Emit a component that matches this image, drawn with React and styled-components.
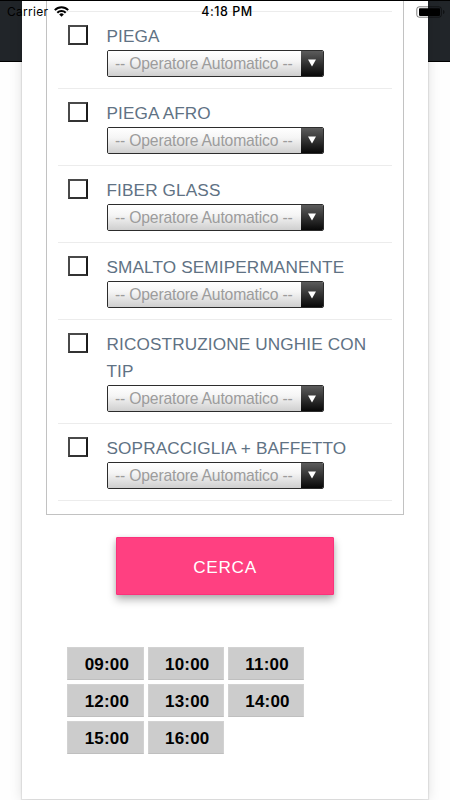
import React, { useState } from 'react';
import styled, { createGlobalStyle } from 'styled-components';

const GlobalStyle = createGlobalStyle`
  * {
    box-sizing: border-box;
  }

  body {
    margin: 0;
    background: #fff;
    font-family: 'Liberation Sans', Arial, sans-serif;
  }
`;

const Page = styled.div`
  position: relative;
  width: 450px;
  height: 800px;
  overflow: hidden;
  padding: 0 22px 1px;
  background: linear-gradient(#212529 61px, #000 61px, #000 62px, #fefefe 62px);
`;

const StatusBar = styled.div`
  position: absolute;
  top: 0;
  left: 0;
  width: 450px;
  height: 22px;
  padding: 0 5px 0 7px;
  display: grid;
  grid-template-columns: 1fr auto 1fr;
  align-items: center;
  border-top: 1px solid #000;
  color: #000;
  z-index: 1;
`;

const Carrier = styled.div`
  display: flex;
  align-items: center;
  gap: 6px;
  font-family: Inter, sans-serif;
  font-size: 12px;
  letter-spacing: 0.3px;
`;

const Clock = styled.div`
  padding-left: 2px;
  font-family: Inter, sans-serif;
  font-size: 12.5px;
  font-weight: 500;
  letter-spacing: 0.5px;
`;

const Battery = styled.svg`
  justify-self: end;
`;

const Card = styled.main`
  height: 799px;
  background: #fff;
  box-shadow: 0 0 1px 1px rgba(0, 0, 0, 0.08), 0 1px 12px rgba(0, 0, 0, 0.13);
`;

const Panel = styled.section`
  width: 358px;
  height: 515px;
  margin-left: 24px;
  padding: 10.6px 11px 0;
  border: 1px solid #c2c2c2;
  border-top: 0;
`;

const ServiceList = styled.ul`
  margin: 0;
  padding: 0;
  list-style: none;
  border-top: 1px solid #ececec;
`;

const ServiceRow = styled.li`
  display: flex;
  align-items: flex-start;
  gap: 18.5px;
  height: ${(props) => (props.$tall ? 103.2 : 77.2)}px;
  padding: 11px 0 0 10px;
  border-bottom: 1px solid #ececec;
`;

const Checkbox = styled.input`
  appearance: none;
  flex: none;
  width: 20px;
  height: 20px;
  margin: 2px 0 0;
  border: 2px solid #222;
  border-color: #4a4a4a #1c1c1c #333 #4a4a4a;
  background: #fff;
`;

const ServiceBody = styled.div`
  flex: 1;
`;

const ServiceName = styled.div`
  color: #5f7284;
  font-size: 17.2px;
  line-height: 27px;
  letter-spacing: 0.12px;
  white-space: pre-line;
`;

const OperatorSelect = styled.div`
  display: flex;
  width: 217.5px;
  height: 27px;
  border: 1px solid #2c2c2c;
  border-radius: 2px;
  overflow: hidden;
`;

const OperatorValue = styled.div`
  flex: 1;
  padding-left: 7.5px;
  background: linear-gradient(#fff, #f5f5f5 40%, #cfcfcf);
  color: #9c9c9c;
  font-size: 15.7px;
  line-height: 25px;
  letter-spacing: -0.18px;
  white-space: nowrap;
`;

const OperatorArrow = styled.div`
  display: flex;
  align-items: center;
  justify-content: center;
  width: 22px;
  background: linear-gradient(#5c5c5c, #080808);
`;

const SearchButton = styled.button`
  display: block;
  width: 217.5px;
  height: 58px;
  margin: 22px 0 0 94.3px;
  padding: 3px 0 0;
  border: 1px solid #fb317b;
  border-radius: 1px;
  background: #ff4081;
  box-shadow: 0 5px 9px rgba(0, 0, 0, 0.28), 0 1px 5px rgba(0, 0, 0, 0.1);
  color: #fff;
  font-family: inherit;
  font-size: 17.2px;
  letter-spacing: 0.7px;
`;

const TimeGrid = styled.div`
  display: grid;
  grid-template-columns: repeat(3, 76.3px);
  grid-auto-rows: 33px;
  gap: 4px;
  margin: 52px 0 0 45.3px;
`;

const TimeSlot = styled.button`
  padding: 2px 0 0 16.4px;
  border: 1px solid #d2d2d2;
  border-bottom-color: #bfbfbf;
  background: #ccc;
  color: #000;
  font-family: inherit;
  font-size: 17px;
  font-weight: bold;
  letter-spacing: 0.2px;
  text-align: left;
`;

const services = [
  { name: 'PIEGA' },
  { name: 'PIEGA AFRO' },
  { name: 'FIBER GLASS' },
  { name: 'SMALTO SEMIPERMANENTE' },
  { name: 'RICOSTRUZIONE UNGHIE CON\nTIP', tall: true },
  { name: 'SOPRACCIGLIA + BAFFETTO' },
];

const times = ['09:00', '10:00', '11:00', '12:00', '13:00', '14:00', '15:00', '16:00'];

const App = () => {
  const [selected, setSelected] = useState([]);

  const toggleService = (name) => {
    setSelected((prev) =>
      prev.includes(name) ? prev.filter((item) => item !== name) : [...prev, name]
    );
  };

  return (
    <Page>
      <GlobalStyle />
      <StatusBar>
        <Carrier>
          <span>Carrier</span>
          <svg width="15" height="11" viewBox="0 0 15 11" fill="none" stroke="#000" strokeWidth="2">
            <path d="M0.8 4.1a9.4 9.4 0 0 1 13.4 0" />
            <path d="M3.3 6.7a5.9 5.9 0 0 1 8.4 0" />
            <path d="M5.2 8.4a3.3 3.3 0 0 1 4.6 0L7.5 10.8z" fill="#000" stroke="none" />
          </svg>
        </Carrier>
        <Clock>4:18 PM</Clock>
        <Battery width="29" height="12" viewBox="0 0 29 12">
          <rect x="0.8" y="0.8" width="24.6" height="10.4" rx="2.4" fill="none" stroke="#000" strokeOpacity="0.5" />
          <rect x="3" y="2.3" width="21" height="7.6" rx="0.8" fill="#000" />
          <path d="M27 4v4c1.2-.4 1.6-1.2 1.6-2S28.2 4.4 27 4z" fill="#000" fillOpacity="0.5" />
        </Battery>
      </StatusBar>
      <Card>
        <Panel>
          <ServiceList>
            {services.map((service) => (
              <ServiceRow key={service.name} $tall={service.tall}>
                <Checkbox
                  type="checkbox"
                  checked={selected.includes(service.name)}
                  onChange={() => toggleService(service.name)}
                />
                <ServiceBody>
                  <ServiceName>{service.name}</ServiceName>
                  <OperatorSelect>
                    <OperatorValue>-- Operatore Automatico --</OperatorValue>
                    <OperatorArrow>
                      <svg width="8" height="8" viewBox="0 0 8 8">
                        <path d="M0 0.5h8L4 7.5z" fill="#fff" />
                      </svg>
                    </OperatorArrow>
                  </OperatorSelect>
                </ServiceBody>
              </ServiceRow>
            ))}
          </ServiceList>
        </Panel>
        <SearchButton>CERCA</SearchButton>
        <TimeGrid>
          {times.map((time) => (
            <TimeSlot key={time}>{time}</TimeSlot>
          ))}
        </TimeGrid>
      </Card>
    </Page>
  );
};

export default App;
